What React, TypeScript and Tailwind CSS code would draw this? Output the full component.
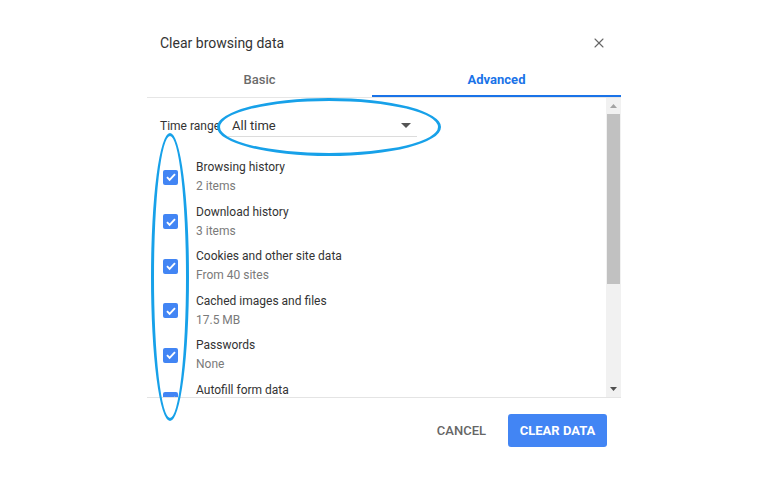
import { X } from "lucide-react";

const items = [
  { title: "Browsing history", detail: "2 items" },
  { title: "Download history", detail: "3 items" },
  { title: "Cookies and other site data", detail: "From 40 sites" },
  { title: "Cached images and files", detail: "17.5 MB" },
  { title: "Passwords", detail: "None" },
  { title: "Autofill form data", detail: "" },
];

function CheckBox() {
  return (
    <div className="flex h-[15px] w-[15px] shrink-0 items-center justify-center rounded-[2px] bg-[#4285f4]">
      <svg width="12" height="12" viewBox="0 0 12 12" fill="none">
        <path d="M2 6.2l2.6 2.6 5.4-5.6" stroke="white" strokeWidth="1.9" />
      </svg>
    </div>
  );
}

export default function App() {
  return (
    <div className="relative h-[483px] w-[768px] overflow-hidden bg-white font-['Roboto',sans-serif] text-[12px] text-[#333]">
      <div className="ml-[147px] w-[474px]">
        <div className="flex h-[62px] items-center justify-between pl-[13px] pr-[14px] pt-[24px]">
          <h1 className="text-[14px] text-[#333]">Clear browsing data</h1>
          <X size={16} strokeWidth={1.6} className="text-[#666]" />
        </div>

        <div className="flex h-[36px] border-b border-[#e6e6e6] text-[13px]">
          <div className="flex w-[225px] items-center justify-center font-medium text-[#6b6b6b]">Basic</div>
          <div className="flex flex-1 items-center justify-center border-b-2 border-[#1a73e8] pt-[2px] font-bold text-[#1a73e8]">Advanced</div>
        </div>

        <div className="flex h-[300px] border-b border-[#e4e4e4]">
          <div className="flex-1 overflow-hidden">
            <div className="flex items-center pl-[13px] pt-[17px]">
              <span className="w-[68px]">Time range</span>
              <div className="flex h-[22px] w-[189px] items-center justify-between border-b border-[#dcdcdc] pl-[4px] pr-[6px] text-[13px]">
                <span>All time</span>
                <svg width="10" height="5" viewBox="0 0 10 5">
                  <path d="M0 0h10L5 5z" fill="#555" />
                </svg>
              </div>
            </div>

            <div className="mt-[21px] flex flex-col gap-[6.5px] pl-[16px]">
              {items.map((item) => (
                <div key={item.title} className="flex h-[38px] items-center gap-[18px]">
                  <CheckBox />
                  <div className="flex flex-col leading-[19px]">
                    <span className="text-[#333]">{item.title}</span>
                    <span className="min-h-[19px] text-[#7a7a7a]">{item.detail}</span>
                  </div>
                </div>
              ))}
            </div>
          </div>

          <div className="flex w-[15px] flex-col bg-[#f1f1f1]">
            <div className="flex h-[16px] items-center justify-center">
              <svg width="7" height="4" viewBox="0 0 7 4">
                <path d="M0 4h7L3.5 0z" fill="#a3a3a3" />
              </svg>
            </div>
            <div className="mx-[1px] h-[170px] bg-[#c1c1c1]" />
            <div className="flex-1" />
            <div className="flex h-[16px] items-center justify-center">
              <svg width="7" height="4" viewBox="0 0 7 4">
                <path d="M0 0h7L3.5 4z" fill="#505050" />
              </svg>
            </div>
          </div>
        </div>

        <div className="flex items-center justify-end gap-[22px] pr-[14px] pt-[16px]">
          <button className="text-[13px] font-medium text-[#666]">CANCEL</button>
          <button className="h-[33px] w-[99px] rounded-[3px] bg-[#4285f4] text-[13px] font-bold text-white">CLEAR DATA</button>
        </div>
      </div>

      <div className="pointer-events-none absolute left-[217px] top-[98px] h-[58px] w-[224px] rounded-[50%] border-[3px] border-[#17a1e9]" />
      <div className="pointer-events-none absolute left-[151px] top-[133px] h-[288px] w-[38px] rounded-[50%] border-[3px] border-[#17a1e9]" />
    </div>
  );
}
